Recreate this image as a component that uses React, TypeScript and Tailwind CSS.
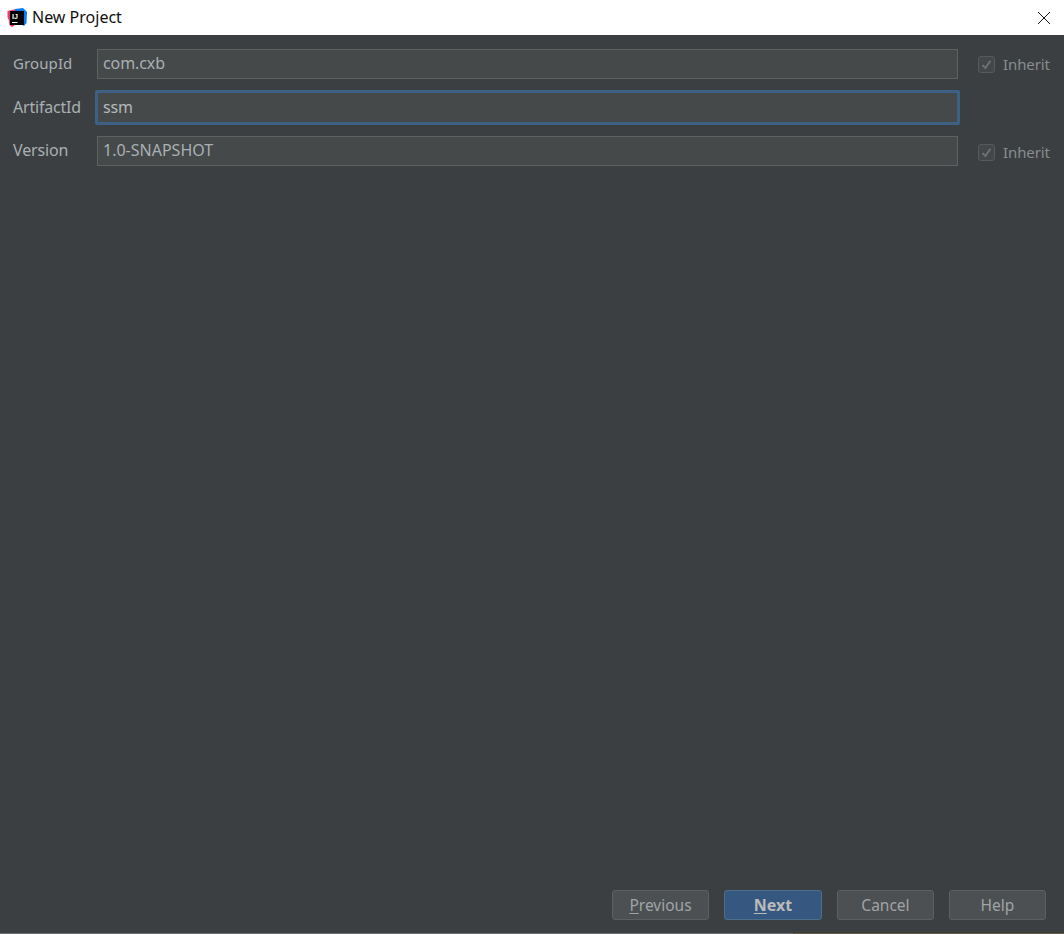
const font = { fontFamily: '"Noto Sans", "Open Sans", sans-serif' };

function Logo() {
  return (
    <svg width="20" height="20" viewBox="0 0 20 20" className="shrink-0">
      <path d="M0.5 3 L9 1 L9 15 L3 15 L0.5 9 Z" fill="#f2386f" />
      <path d="M8 1 L16 0 L20 4 L19.5 15 L17 18 L9 12 Z" fill="#087cfa" />
      <path d="M2 13 L8 17 L5 19 L2.5 17 Z" fill="#fe2857" />
      <rect x="3" y="3" width="14" height="14" fill="#000" />
      <text x="5" y="10.5" fontSize="7" fontWeight="700" fill="#fff" style={{ fontFamily: '"Liberation Sans", sans-serif' }}>IJ</text>
      <rect x="5" y="14" width="5.5" height="1" fill="#fff" />
    </svg>
  );
}

function Inherit({ className = "" }: { className?: string }) {
  return (
    <label className={"ml-[20px] flex items-center gap-[8px] text-[15px] tracking-[-0.1px] text-[#878d90] " + className}>
      <span className="flex h-[17px] w-[17px] items-center justify-center rounded-[3px] border border-[#565a5c] bg-[#43474a]">
        <svg width="13" height="13" viewBox="0 0 13 13" fill="none">
          <path d="M2.5 7 L5.3 10 L10.5 2.8" stroke="#6f7476" strokeWidth="1.8" />
        </svg>
      </span>
      Inherit
    </label>
  );
}

function Button({ children, primary = false }: { children: React.ReactNode; primary?: boolean }) {
  return (
    <button
      className={
        primary
          ? "h-[30px] w-[98px] rounded-[3px] border border-[#4c708c] bg-[#365880] text-[16px] font-bold text-[#bbbbbb]"
          : "h-[30px] w-[97px] rounded-[3px] border border-[#5e6060] bg-[#4c5052] pt-[1px] text-[15.5px] text-[#a0a4a6]"
      }
    >
      {children}
    </button>
  );
}

export default function App() {
  return (
    <div className="flex h-[934px] w-[1064px] flex-col overflow-hidden bg-[#3c3f41]" style={font}>
      <header className="flex h-[35px] items-center bg-white pl-[7px] pr-[12px]">
        <Logo />
        <span className="relative top-[-1px] ml-[5px] text-[16px] text-[#111111]">New Project</span>
        <svg width="14" height="14" viewBox="0 0 14 14" className="ml-auto mr-[1px]" fill="none">
          <path d="M1 1 L13 13 M13 1 L1 13" stroke="#111" strokeWidth="1" />
        </svg>
      </header>

      <main className="flex flex-1 flex-col pl-[13px] pt-[14px] text-[15px] text-[#a9b0b3]">
        <div className="flex h-[30px] items-center">
          <span className="relative top-[-1px] w-[84px] shrink-0 tracking-[0.1px]">GroupId</span>
          <div className="flex h-[30px] w-[861px] items-center border border-[#5e6263] bg-[#45494a] px-[5px] text-[16px] tracking-[-0.1px] text-[#a9b0b3]">
            <span className="relative top-[-1px]">com.cxb</span>
          </div>
          <Inherit />
        </div>
        <div className="mt-[11px] flex h-[35px] items-center">
          <span className="relative top-[-1px] w-[82px] shrink-0 text-[16px] tracking-[-0.2px]">ArtifactId</span>
          <div className="flex h-[35px] w-[865px] items-center rounded-[2px] border-[3px] border-[#3d6185] bg-[#45494a] px-[5px] text-[16px] tracking-[-0.2px] text-[#b4b9bb]">
            <span className="relative top-[-1px]">ssm</span>
          </div>
        </div>
        <div className="mt-[11px] flex h-[30px] items-center">
          <span className="relative top-[-1px] w-[84px] shrink-0 text-[16px] tracking-[-0.15px]">Version</span>
          <div className="flex h-[30px] w-[861px] items-center border border-[#5e6263] bg-[#45494a] pl-[5px] pr-[6px] text-[16px] text-[#a9b0b3]">
            <span className="relative top-[-1px]">1.0-SNAPSHOT</span>
          </div>
          <Inherit className="relative top-[1px]" />
        </div>
      </main>

      <footer className="flex justify-end gap-[15px] pb-[13px] pr-[18px]">
        <Button><span className="underline underline-offset-2">P</span>revious</Button>
        <Button primary><span className="underline underline-offset-2">N</span>ext</Button>
        <Button>Cancel</Button>
        <Button>Help</Button>
      </footer>
      <div className="flex h-[1px]">
        <div className="w-[793px] bg-[#6b6d6e]" />
        <div className="flex-1 bg-[#6b5a3f]" />
      </div>
    </div>
  );
}
